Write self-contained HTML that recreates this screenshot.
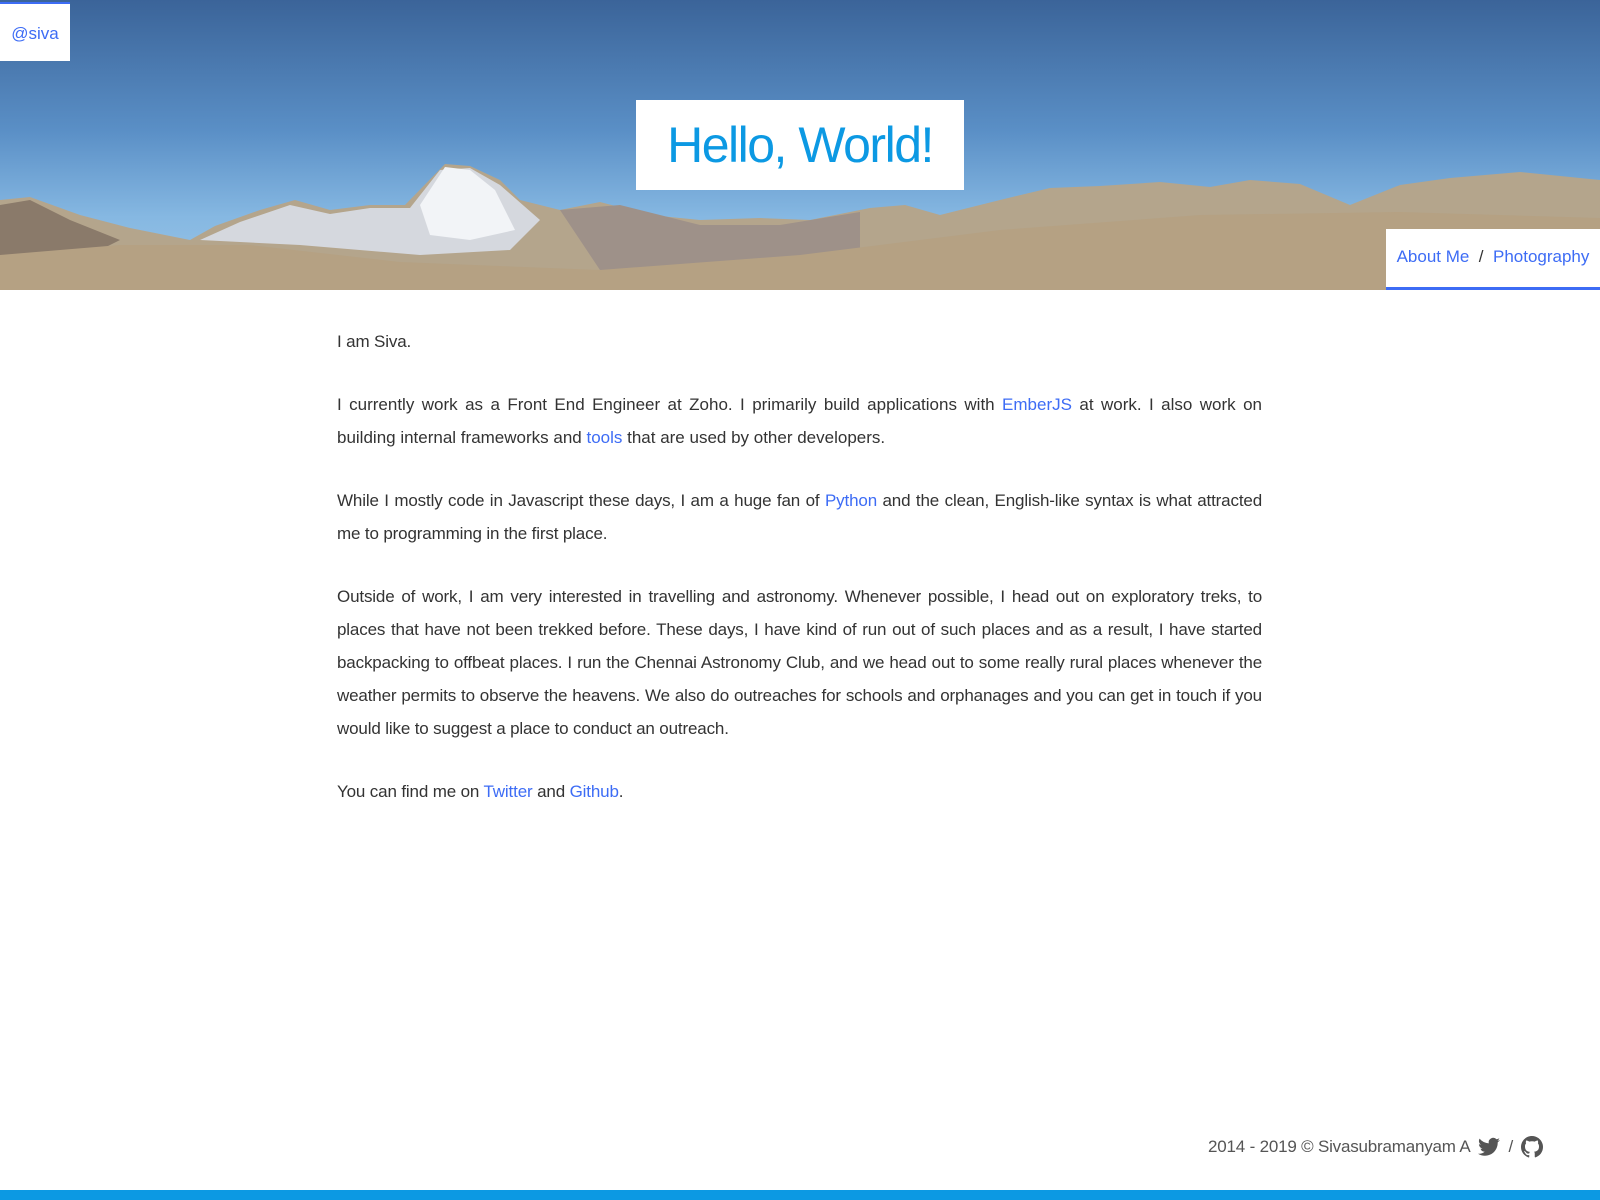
<!DOCTYPE html>
<html><head><meta charset="utf-8"><style>
*{box-sizing:border-box}
body{margin:0;width:1600px;height:1200px;position:relative;font-family:"Liberation Sans",sans-serif;background:#fff;color:#333;overflow:hidden}
a{color:#3d6cf5;text-decoration:none}
.hdr{position:absolute;left:0;top:0;width:1600px;height:290px;background:linear-gradient(180deg,#3b6499 0%,#5a8fc6 45%,#86b8e2 75%,#9cc6e6 100%);overflow:hidden}
.siva{position:absolute;left:0;top:2px;width:70px;height:59px;background:#fff;border-top:2px solid #3d6cf5;font-size:17px;line-height:60px;text-align:center}
.hello{position:absolute;left:636px;top:100px;width:328px;height:90px;background:#fff;color:#0c99e3;font-size:50px;text-align:center;line-height:90px;letter-spacing:-1.5px}
.nav{position:absolute;right:0;top:229px;width:214px;height:61px;background:#fff;border-bottom:3px solid #3d6cf5;font-size:17px;line-height:56px;text-align:center;color:#333}
.c{position:absolute;left:337px;top:325px;width:925px;font-size:17px;line-height:33px;text-align:justify;color:#333;letter-spacing:-0.15px}
.c p{margin:0 0 30px}
.c p.w{letter-spacing:0}
.ft{position:absolute;right:57px;top:1136px;font-size:17px;color:#555;display:flex;align-items:center;gap:8px;letter-spacing:-0.2px}
.bar{position:absolute;left:0;top:1190px;width:1600px;height:10px;background:#0c99e3}
</style></head><body>
<div class="hdr">
<svg width="1600" height="290" style="position:absolute;left:0;top:0">
<path d="M0 200 L30 197 L80 215 L130 228 L190 240 L215 226 L260 210 L295 200 L330 210 L370 205 L405 205 L445 164 L470 166 L500 180 L520 200 L560 210 L600 202 L650 215 L700 220 L760 218 L810 220 L870 208 L905 205 L940 215 L1000 200 L1050 188 L1100 186 L1160 182 L1210 187 L1250 180 L1300 184 L1350 205 L1400 185 L1450 178 L1520 172 L1600 180 L1600 290 L0 290Z" fill="#b4a58c"/>
<path d="M200 240 L240 222 L290 205 L330 214 L370 208 L410 208 L440 170 L470 168 L500 185 L540 220 L510 250 L420 255 L300 245Z" fill="#d5d8de"/>
<path d="M420 205 L445 167 L470 170 L495 190 L515 230 L470 240 L430 235Z" fill="#f2f4f7"/>
<path d="M0 205 L30 200 L70 220 L120 240 L80 260 L0 260Z" fill="#8a7a6a"/>
<path d="M560 210 L620 205 L700 225 L780 225 L860 212 L860 270 L600 270Z" fill="#9e9189"/>
<path d="M0 255 L120 245 L250 245 L400 262 L600 270 L800 255 L1000 230 L1200 215 L1400 212 L1600 218 L1600 290 L0 290Z" fill="#b5a183"/>
</svg>
<div class="siva"><a>@siva</a></div>
<div class="hello">Hello, World!</div>
<div class="nav"><a>About Me</a> &nbsp;/&nbsp; <a>Photography</a></div>
</div>
<div class="c">
<p>I am Siva.</p>
<p class="w">I currently work as a Front End Engineer at Zoho. I primarily build applications with <a>EmberJS</a> at work. I also work on building internal frameworks and <a>tools</a> that are used by other developers.</p>
<p>While I mostly code in Javascript these days, I am a huge fan of <a>Python</a> and the clean, English-like syntax is what attracted me to programming in the first place.</p>
<p>Outside of work, I am very interested in travelling and astronomy. Whenever possible, I head out on exploratory treks, to places that have not been trekked before. These days, I have kind of run out of such places and as a result, I have started backpacking to offbeat places. I run the Chennai Astronomy Club, and we head out to some really rural places whenever the weather permits to observe the heavens. We also do outreaches for schools and orphanages and you can get in touch if you would like to suggest a place to conduct an outreach.</p>
<p>You can find me on <a>Twitter</a> and <a>Github</a>.</p>
</div>
<div class="ft"><span>2014 - 2019 © Sivasubramanyam A</span>
<svg width="22" height="20" viewBox="0 0 24 20"><path fill="#555" d="M24 2.4a9.8 9.8 0 0 1-2.8.8A4.9 4.9 0 0 0 23.3.4a9.9 9.9 0 0 1-3.1 1.2A4.9 4.9 0 0 0 11.8 6 14 14 0 0 1 1.7.9a4.9 4.9 0 0 0 1.5 6.6 4.9 4.9 0 0 1-2.2-.6 4.9 4.9 0 0 0 3.9 4.8 4.9 4.9 0 0 1-2.2.1 4.9 4.9 0 0 0 4.6 3.4A9.9 9.9 0 0 1 0 17.3 14 14 0 0 0 7.5 19.5c9.1 0 14-7.5 14-14v-.6A10 10 0 0 0 24 2.4z"/></svg>
<span>/</span>
<svg width="22" height="22" viewBox="0 0 16 16"><path fill="#555" d="M8 0C3.6 0 0 3.6 0 8c0 3.5 2.3 6.5 5.5 7.6.4.1.5-.2.5-.4v-1.4c-2.2.5-2.7-1-2.7-1-.4-.9-.9-1.2-.9-1.2-.7-.5.1-.5.1-.5.8.1 1.2.8 1.2.8.7 1.2 1.9.9 2.3.7.1-.5.3-.9.5-1.1-1.8-.2-3.6-.9-3.6-4 0-.9.3-1.6.8-2.1-.1-.2-.4-1 .1-2.1 0 0 .7-.2 2.2.8.6-.2 1.3-.3 2-.3s1.4.1 2 .3c1.5-1 2.2-.8 2.2-.8.4 1.1.2 1.9.1 2.1.5.6.8 1.3.8 2.1 0 3.1-1.9 3.7-3.6 3.9.3.3.5.8.5 1.5v2.2c0 .2.1.5.6.4C13.7 14.5 16 11.5 16 8c0-4.4-3.6-8-8-8z"/></svg>
</div>
<div class="bar"></div>
</body></html>
